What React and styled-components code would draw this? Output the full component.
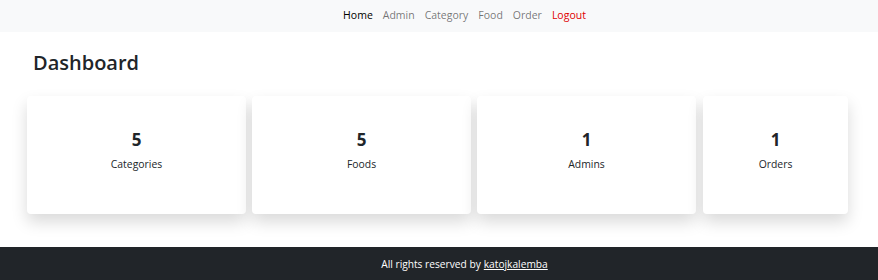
import React from "react";
import styled, { createGlobalStyle } from "styled-components";

const GlobalStyle = createGlobalStyle`
	body {
		margin: 0;
		font-family: "Open Sans", "Noto Sans", sans-serif;
		color: #212529;
		background: #fff;
	}
`;

const Page = styled.div`
	display: flex;
	flex-direction: column;
	min-height: 280px;
`;

const NavBar = styled.nav`
	height: 32px;
	box-sizing: border-box;
	padding: 0 0 2px 51px;
	background: #f8f9fa;
	display: flex;
	justify-content: center;
	align-items: center;
`;

const NavLink = styled.a`
	padding: 0 5px;
	font-size: 10.5px;
	color: ${(p) => (p.$danger ? "#e00000" : p.$active ? "#000" : "rgba(0,0,0,0.55)")};
	text-decoration: none;
	cursor: pointer;
`;

const Main = styled.main`
	flex: 1;
	padding: 0 29px 0 27px;
`;

const Title = styled.h2`
	margin: 19px 0 21px 6px;
	font-size: 20px;
	font-weight: 600;
	line-height: 24px;
`;

const CardRow = styled.div`
	display: grid;
	grid-template-columns: 219px 219px 219px 146px;
	column-gap: 6px;
	margin-bottom: 33px;

	& > :last-child {
		margin-left: 1px;
	}
`;

const Card = styled.div`
	height: 118px;
	background: #fff;
	border-radius: 4px;
	box-shadow: 0 8px 16px rgba(0, 0, 0, 0.15);
	display: flex;
	flex-direction: column;
	align-items: center;
	padding-top: 33px;
	box-sizing: border-box;
`;

const Count = styled.div`
	font-size: 17px;
	font-weight: 700;
	line-height: 22px;
`;

const Label = styled.div`
	margin-top: 6px;
	font-size: 10.4px;
	line-height: 14px;
`;

const Footer = styled.footer`
	height: 33px;
	padding-left: 51px;
	background: #212529;
	color: #fff;
	display: flex;
	justify-content: center;
	align-items: center;
	font-size: 10.2px;
`;

const FooterLink = styled.a`
	color: #fff;
	text-decoration: underline;
	margin-left: 3px;
`;

const stats = [
	{ count: 5, label: "Categories" },
	{ count: 5, label: "Foods" },
	{ count: 1, label: "Admins" },
	{ count: 1, label: "Orders" }
];

export default function App() {
	return (
		<Page>
			<GlobalStyle />
			<NavBar>
				<NavLink $active>Home</NavLink>
				<NavLink>Admin</NavLink>
				<NavLink>Category</NavLink>
				<NavLink>Food</NavLink>
				<NavLink>Order</NavLink>
				<NavLink $danger>Logout</NavLink>
			</NavBar>
			<Main>
				<Title>Dashboard</Title>
				<CardRow>
					{stats.map((s) => (
						<Card key={s.label}>
							<Count>{s.count}</Count>
							<Label>{s.label}</Label>
						</Card>
					))}
				</CardRow>
			</Main>
			<Footer>
				All rights reserved by <FooterLink>katojkalemba</FooterLink>
			</Footer>
		</Page>
	);
}
